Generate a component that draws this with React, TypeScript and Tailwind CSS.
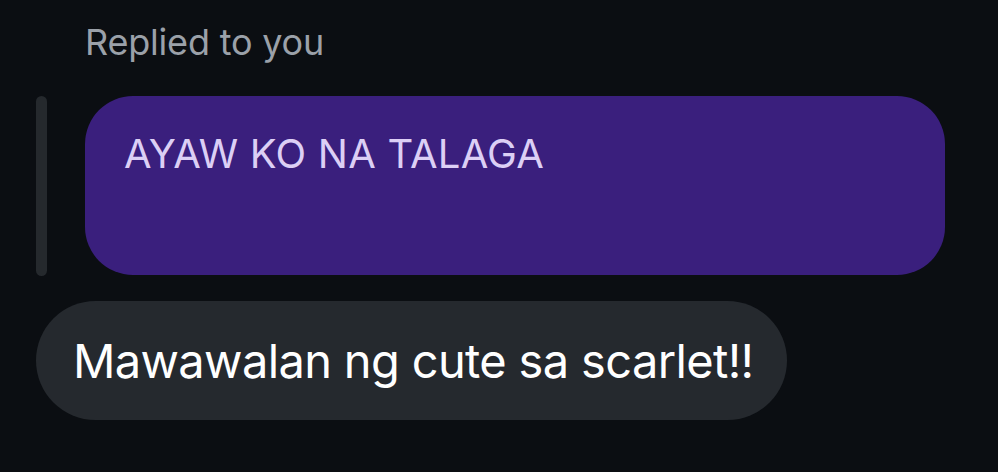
export default function App() {
  return (
    <main className="w-[998px] h-[472px] overflow-hidden bg-[#0b0e12] font-['Inter',sans-serif]">
      <p className="pl-[85px] pt-[22px] text-[36px] leading-[40px] text-[#9ba1a9] tracking-[-0.2px]">
        Replied to you
      </p>

      <div className="mt-[34px] flex pl-[36px] pr-[53px] gap-[38px]">
        <div className="w-[11px] h-[180px] rounded-full bg-[#25292d]"></div>
        <div className="flex-1 h-[179px] rounded-[48px] bg-[#3a1f7d] px-[39px] pt-[36px]">
          <p className="text-[40px] leading-[44px] text-[#dccff5] tracking-[0.2px]">
            AYAW KO NA TALAGA
          </p>
        </div>
      </div>

      <div className="mt-[25px] pl-[36px]">
        <div className="inline-flex h-[119px] items-center rounded-full bg-[#25292e] pl-[37px] pr-[34px]">
          <p className="text-[47px] leading-[52px] text-white tracking-[-0.65px]">
            Mawawalan ng cute sa scarlet!!
          </p>
        </div>
      </div>
    </main>
  );
}
